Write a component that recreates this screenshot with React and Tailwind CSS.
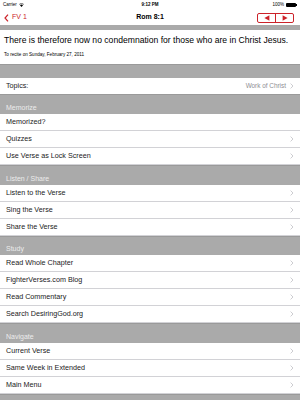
import React from 'react';

const sections = [
    { title: 'Memorize', rows: ['Memorized?', 'Quizzes', 'Use Verse as Lock Screen'], chevron: [false, true, true] },
    { title: 'Listen / Share', rows: ['Listen to the Verse', 'Sing the Verse', 'Share the Verse'] },
    { title: 'Study', rows: ['Read Whole Chapter', 'FighterVerses.com Blog', 'Read Commentary', 'Search DesiringGod.org'] },
    { title: 'Navigate', rows: ['Current Verse', 'Same Week in Extended', 'Main Menu'] },
];

const Chevron = () => (
    <svg width="4" height="6" viewBox="0 0 4 6" className="shrink-0">
        <polyline points="0.6,0.6 3,3 0.6,5.4" fill="none" stroke="#c7c7cc" strokeWidth="0.9" />
    </svg>
);

const Row = ({ label, chevron = true }) => (
    <div className="h-[17px] bg-white border-b border-[#d2d2d6] flex items-center justify-between pl-[6px] pr-[6px]">
        <span className="text-[7.2px] text-[#1a1a1a]">{label}</span>
        {chevron && <Chevron />}
    </div>
);

const Header = ({ title, h = 'h-[20px]' }) => (
    <div className={`${h} bg-[#aaaaaa] border-t border-[#9a9a9a] flex items-end px-[6px] pb-[3px]`}>
        <span className="text-[7px] text-[#ececec] leading-none">{title}</span>
    </div>
);

export default function App() {
    return (
        <div className="w-[300px] h-[400px] overflow-hidden bg-[#aaaaaa]" style={{ fontFamily: "'Liberation Sans', Arial, sans-serif" }}>
            {/* status bar */}
            <div className="h-[10px] bg-white flex items-center justify-between px-[3px] relative">
                <div className="flex items-center gap-[2px]">
                    <span className="text-[4.5px] text-black">Carrier</span>
                    <svg width="5" height="4" viewBox="0 0 10 8">
                        <path d="M5 8 L2 4.5 A4.5 4.5 0 0 1 8 4.5 Z" fill="#000" />
                        <path d="M0.5 2.8 A6.5 6.5 0 0 1 9.5 2.8" fill="none" stroke="#000" strokeWidth="1.2" />
                    </svg>
                </div>
                <span className="absolute left-1/2 -translate-x-1/2 text-[4.5px] font-bold text-black">9:12 PM</span>
                <div className="flex items-center gap-[2px]">
                    <span className="text-[4.5px] text-black">100%</span>
                    <div className="flex items-center">
                        <div className="w-[10px] h-[4px] bg-black rounded-[1px]" />
                        <div className="w-[1px] h-[2px] bg-black" />
                    </div>
                </div>
            </div>

            {/* nav bar */}
            <div className="h-[15px] bg-white flex items-center justify-between px-[4px] relative">
                <div className="flex items-center gap-[3px] text-[#cc2229]">
                    <svg width="5" height="8" viewBox="0 0 5 8">
                        <polyline points="4,0.7 1,4 4,7.3" fill="none" stroke="#cc2229" strokeWidth="1.2" />
                    </svg>
                    <span className="text-[7px]">FV 1</span>
                </div>
                <span className="absolute left-1/2 -translate-x-1/2 text-[7px] font-bold text-black">Rom 8:1</span>
                <div className="flex h-[10px] w-[37px] border border-[#cc2229] rounded-[2px] mr-[2px]">
                    <div className="flex-1 flex items-center justify-center border-r border-[#cc2229]">
                        <svg width="6" height="6" viewBox="0 0 6 6"><polygon points="0.4,3 5.4,0.2 5.4,5.8" fill="#cc2229" /></svg>
                    </div>
                    <div className="flex-1 flex items-center justify-center">
                        <svg width="6" height="6" viewBox="0 0 6 6"><polygon points="5.6,3 0.6,0.2 0.6,5.8" fill="#cc2229" /></svg>
                    </div>
                </div>
            </div>
            <div className="h-[5px] bg-[#aaaaaa]" />

            {/* verse */}
            <div className="h-[34px] bg-white px-[4px] pt-[5px]">
                <p className="text-[8.6px] text-black leading-[10px] whitespace-nowrap">There is therefore now no condemnation for those who are in Christ Jesus.</p>
                <p className="text-[4.6px] text-black mt-[7px]">To recite on Sunday, February 27, 2011</p>
            </div>
            <div className="h-[14px] bg-[#aaaaaa] border-t border-[#9a9a9a]" />

            {/* topics */}
            <div className="h-[16px] bg-white flex items-center justify-between px-[6px]">
                <span className="text-[7.2px] text-[#1a1a1a]">Topics:</span>
                <div className="flex items-center gap-[4px]">
                    <span className="text-[6.4px] text-[#8e8e93]">Work of Christ</span>
                    <Chevron />
                </div>
            </div>

            {sections.map((s) => (
                <div key={s.title}>
                    <Header title={s.title} h={s.title === 'Study' ? 'h-[19px]' : 'h-[20px]'} />
                    {s.rows.map((r, i) => (
                        <Row key={r} label={r} chevron={s.chevron ? s.chevron[i] : true} />
                    ))}
                </div>
            ))}
            <div className="h-[8px] bg-[#aaaaaa] border-t border-[#9a9a9a]" />
        </div>
    );
}
